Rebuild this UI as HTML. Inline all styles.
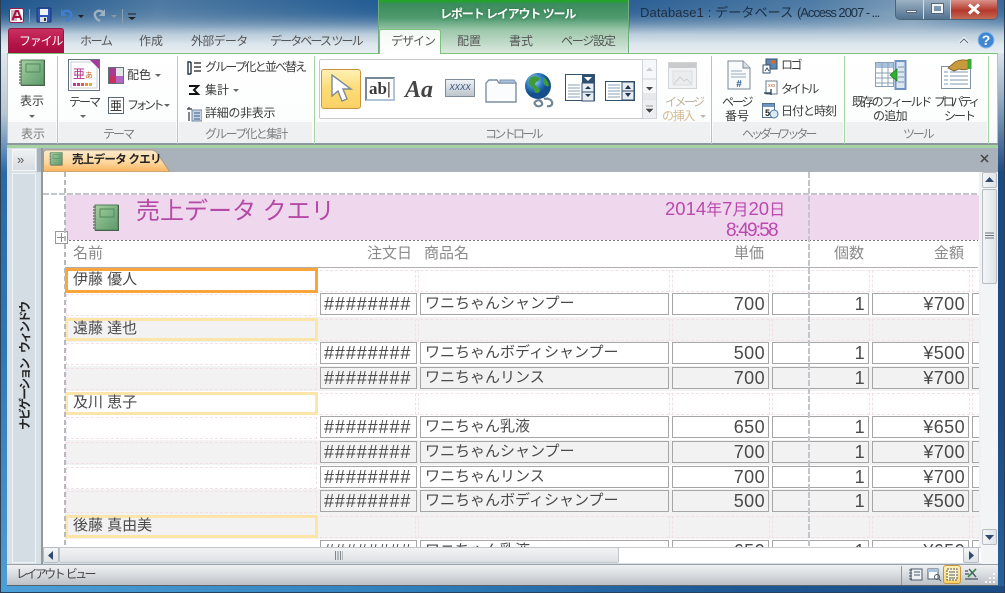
<!DOCTYPE html>
<html lang="ja"><head><meta charset="utf-8"><title>Access</title>
<style>
html,body{margin:0;padding:0;background:#2a6aa5}
body{width:1005px;height:593px;position:relative;overflow:hidden;font-family:"Liberation Sans","Noto Sans CJK JP",sans-serif;font-size:12px;color:#3c3c3c}
div,span.p,svg{position:absolute;box-sizing:border-box}
.t{white-space:nowrap;line-height:14px;height:14px}
.k{letter-spacing:-1.6px}
.g{color:#7d7d7d}
.d{color:#bfb4a2}
.band{top:122px;height:21px;background:#eef0f1}
.sep{top:56px;width:1px;height:88px;background:#a6d3a6}
.tab{top:34px;color:#555;letter-spacing:-1.4px}
.a{width:0;height:0;border-left:3px solid transparent;border-right:3px solid transparent;border-top:3px solid #666}
.h{font-size:15px;color:#8a8a8a;top:246px;line-height:15px;white-space:nowrap}
.r{left:65px;width:916px}
.gr{background:#f2f2f2}
.c{top:1px;height:22px;border:1px solid #a6a6a6;font-size:15px;line-height:20px;white-space:nowrap;overflow:hidden;color:#4a4a4a}
.dt{left:255px;width:97px;letter-spacing:.9px;padding-left:3px;font-size:18px}
.pr{left:355px;width:249px;padding-left:4px}
.n{font-family:"Liberation Sans",sans-serif;font-size:18px;letter-spacing:.4px;text-align:right;padding-right:3px}
.c3{left:607px;width:97px}.c4{left:707px;width:97px}.c5{left:807px;width:97px}.c6{left:907px;width:20px}
.nm{left:0;top:1px;width:253px;height:23px;border:3px solid #fde4a8;font-size:15px;line-height:15px;padding-left:5px;color:#4a4a4a;white-space:nowrap}
.dp{border:1px dashed #f1e0e8}
.ph{left:255px;top:2px;width:660px;height:22px;border-top:1px dashed #f1e0e8;border-bottom:1px dashed #f1e0e8}
.v{width:1px;top:2px;height:22px;border-left:1px dashed #f1e0e8}
.dg{font-size:18.500px;font-family:"Liberation Sans",sans-serif}
</style></head><body>
<svg width="0" height="0" style="position:absolute"><defs>
<linearGradient id="nb" x1="0" y1="0" x2="1" y2="1"><stop offset="0" stop-color="#a9cfa0"/><stop offset=".5" stop-color="#7fb385"/><stop offset="1" stop-color="#5d9a6a"/></linearGradient>
<symbol id="note" viewBox="0 0 28 28"><rect x="3" y="1" width="24" height="26" fill="#444"/><rect x="3" y="1" width="23" height="25" fill="url(#nb)" stroke="#4b7f57"/><rect x="8" y="5" width="14" height="8" fill="none" stroke="#4f8a5e"/><path d="M1 3h3M1 6h3M1 9h3M1 12h3M1 15h3M1 18h3M1 21h3M1 24h3" stroke="#777" stroke-width="1.4"/></symbol>
</defs></svg>

<!-- window frame -->
<div style="left:0;top:0;width:1005px;height:593px;background:linear-gradient(180deg,#2a6096 0,#3a6d9d 8px,#6f93b3 18px,#adc2d4 30px,#dbe5ec 44px,#e9eef2 53px)"></div>
<div style="left:0;top:0;width:630px;height:34px;background:linear-gradient(95deg,#174f88 0,#5c84a8 25%,#3d6d9b 45%,#205b95 60%,#2b6398 100%);opacity:.7;-webkit-mask-image:linear-gradient(180deg,#000 40%,transparent)"></div>
<div style="left:628px;top:0;width:377px;height:34px;background:linear-gradient(90deg,#2c5f94 0,#5f88ad 50%,#9fb5c7 75%,#3a6b9c 100%);opacity:.7;-webkit-mask-image:linear-gradient(180deg,#000 40%,transparent)"></div>
<div style="left:0;top:53px;width:7px;height:540px;background:linear-gradient(180deg,#dfe7ee 0,#b9c7d4 60px,#296aa6 120px,#2c79b8 300px,#57a6d9 593px)"></div>
<div style="left:998px;top:53px;width:7px;height:540px;background:linear-gradient(180deg,#d8e2ea 0,#9fb3c6 40px,#1d4a80 120px,#1d4a80 360px,#2a6aa8 593px)"></div>
<div style="left:0;top:586px;width:1005px;height:7px;background:linear-gradient(90deg,#4ba0d8,#2f7fbd 40%,#1e5a96 70%,#1b4c85);border-bottom:1px solid #24425f"></div>
<div style="left:0;top:0;width:1px;height:593px;background:#2c3e50"></div>
<div style="left:1004px;top:0;width:1px;height:593px;background:#2c3e50"></div>

<!-- contextual tab band -->
<div style="left:378px;top:0;width:251px;height:53px;background:linear-gradient(180deg,#23a32a 0,#23a32a 2px,#3a8b5c 3px,#4e9a6e 18px,#9cc7aa 30px,#dbe9df 53px);border-left:1px solid #6fae7c;border-right:1px solid #6fae7c"></div>
<div class="t" style="left:440px;top:7px;color:#fff;font-weight:bold;font-size:12px;letter-spacing:-1.1px;text-shadow:0 0 3px #2a6b44">レポート レイアウト ツール</div>

<!-- QAT -->
<svg style="left:8px;top:6px" width="135" height="20" viewBox="0 0 135 20">
<rect x="1.5" y="2.5" width="14" height="14" rx="2" fill="#fff" stroke="#9c1a48"/><rect x="3" y="4" width="6" height="11" fill="#d7b0c0"/>
<path d="M4.5 14 8 5h2l3.500 9M6 11h6" fill="none" stroke="#a3103f" stroke-width="2"/>
<path d="M21.500 3v14" stroke="#8ea0b0"/>
<rect x="29" y="2" width="14" height="14" rx="1" fill="#2e56b4" stroke="#1c3478"/><rect x="32" y="3" width="8" height="6" fill="#eef3fa"/><rect x="32" y="11" width="7" height="5" fill="#d8dfe8"/><rect x="36" y="12" width="2" height="3" fill="#333"/>
<path d="M55 6c5-3 9 0 8 4-1 3-3 4-5 5" fill="none" stroke="#3f7fd0" stroke-width="2.400"/><path d="M53 3v7h6z" fill="#3f7fd0"/>
<path d="M70 9l3 3 3-3z" fill="#222"/>
<path d="M95 6c-5-3-9 0-8 4 1 3 3 4 5 5" fill="none" stroke="#9fb0be" stroke-width="2.400"/><path d="M97 3v7h-6z" fill="#9fb0be"/>
<path d="M103 9l3 3 3-3z" fill="#8a97a3"/>
<path d="M114.500 3v14" stroke="#8ea0b0"/>
<path d="M120 8h8" stroke="#222"/><path d="M120 11l4 3 4-3z" fill="#222"/>
</svg>

<!-- title -->
<div class="t" style="left:640px;top:6px;font-size:13px;color:#1d2f44;letter-spacing:.12px">Database1 : データベース <span style="letter-spacing:-1.050px">(Access 2007 - ...</span></div>
<div style="left:895px;top:0;width:103px;height:20px;border:1px solid #4d6578;border-top:0;border-radius:0 0 5px 5px;overflow:hidden;background:#6d8ba6">
<div style="left:0;top:0;width:28px;height:19px;background:linear-gradient(180deg,#9db1c3,#52728f);border-right:1px solid #d5dee6"></div>
<div style="left:28px;top:0;width:27px;height:19px;background:linear-gradient(180deg,#9db1c3,#52728f);border-right:1px solid #d5dee6"></div>
<div style="left:55px;top:0;width:47px;height:19px;background:linear-gradient(180deg,#d9918a,#b4392c 55%,#c26a55)"></div>
<div style="left:10px;top:10px;width:11px;height:3px;background:#f4f6f8;border:1px solid #56697a"></div>
<div style="left:36px;top:4px;width:11px;height:9px;border:2px solid #f1f4f7;outline:1px solid #56697a"></div>
<svg style="left:70px;top:3px" width="16" height="12"><path d="M3 1.500l10 9M13 1.500l-10 9" stroke="#fff" stroke-width="3"/></svg>
</div>

<!-- file tab + tabs -->
<div style="left:8px;top:28px;width:56px;height:26px;border-radius:3px 3px 0 0;background:linear-gradient(180deg,#c9305f,#b61549 55%,#a50c40);border:1px solid #8f1a3f;border-bottom:0"></div>
<div class="t" style="left:19px;top:34px;color:#fff;letter-spacing:-1.2px">ファイル</div>
<div class="t tab" style="left:80px">ホーム</div>
<div class="t tab" style="left:139px;letter-spacing:0">作成</div>
<div class="t tab" style="left:191px;letter-spacing:-.7px">外部データ</div>
<div class="t tab" style="left:270px;letter-spacing:-1.900px">データベース ツール</div>
<div class="t tab" style="left:457px;letter-spacing:0">配置</div>
<div class="t tab" style="left:509px;letter-spacing:0">書式</div>
<div class="t tab" style="left:561px;letter-spacing:-1.200px">ページ設定</div>

<svg style="left:955px;top:30px" width="42" height="20"><path d="M5 13l4-4 4 4" fill="none" stroke="#fff" stroke-width="3"/><path d="M5 13l4-4 4 4" fill="none" stroke="#5b6b7a" stroke-width="1.200"/><circle cx="31" cy="10" r="8" fill="#3f86d3" stroke="#8db9e6"/><text x="31" y="15" font-size="14" font-weight="bold" fill="#fff" text-anchor="middle" font-family="Liberation Sans">?</text></svg>

<!-- ribbon body -->
<div style="left:7px;top:53px;width:991px;height:92px;background:linear-gradient(180deg,#fff,#fcfdfd 70%,#f6f7f8);border-top:1px solid #79c279;border-left:1px solid #a7d0a7;border-right:1px solid #b7c3cc"></div>
<div style="left:379px;top:29px;width:62px;height:25px;background:linear-gradient(180deg,#f4f9f5,#fff);border:1px solid #79c279;border-bottom:0;border-radius:3px 3px 0 0"></div>
<div class="t tab" style="left:391px;color:#555;letter-spacing:-1px">デザイン</div>

<div style="left:7px;top:143px;width:991px;height:2px;background:#8f979e"></div>
<div style="left:7px;top:145px;width:991px;height:3px;background:#a5d2a3"></div>

<div class="band" style="left:8px;width:48px"></div>
<div class="band" style="left:59px;width:117px"></div>
<div class="band" style="left:179px;width:133px"></div>
<div class="band" style="left:316px;width:394px"></div>
<div class="band" style="left:713px;width:130px"></div>
<div class="band" style="left:846px;width:141px"></div>
<div class="sep" style="left:57px"></div><div class="sep" style="left:177px"></div><div class="sep" style="left:314px"></div><div class="sep" style="left:711px"></div><div class="sep" style="left:844px"></div><div class="sep" style="left:988px"></div>

<div class="t g" style="left:21px;top:127px">表示</div>
<div class="t g k" style="left:103px;top:127px;letter-spacing:-2px">テーマ</div>
<div class="t g" style="left:205px;top:127px;letter-spacing:-1.700px">グループ化と集計</div>
<div class="t g" style="left:485px;top:127px;letter-spacing:-2.700px">コントロール</div>
<div class="t g" style="left:742px;top:127px;letter-spacing:-3px">ヘッダー/フッター</div>
<div class="t g" style="left:903px;top:127px;letter-spacing:-2.200px">ツール</div>

<!-- view -->
<svg style="left:18px;top:59px" width="28" height="28"><use href="#note" width="28" height="28"/></svg>
<div class="t" style="left:20px;top:94px">表示</div><div class="a" style="left:29px;top:115px"></div>

<!-- theme -->
<svg style="left:68px;top:59px" width="32" height="32"><rect x=".5" y=".5" width="31" height="31" fill="#fff" stroke="#5f6f80"/><rect x="3" y="3" width="26" height="26" fill="#fff" stroke="#c9ced4"/><path d="M22 1h9v9z" fill="#a43b99"/><text x="5" y="19" font-size="12" fill="#b5268a" font-family="Noto Sans CJK JP">亜</text><text x="17" y="19" font-size="8" fill="#c0622a" font-family="Noto Sans CJK JP">あ</text><path d="M5 24h3v3H5z" fill="#b43aa0"/><path d="M9 24h3v3H9z" fill="#c83a7a"/><path d="M13 24h3v3h-3z" fill="#e05a50"/><path d="M17 24h3v3h-3z" fill="#e8903a"/><path d="M21 24h3v3h-3z" fill="#d8b030"/></svg>
<div class="t k" style="left:69px;top:95px;letter-spacing:-2px">テーマ</div><div class="a" style="left:80px;top:115px"></div>
<svg style="left:108px;top:67px" width="16" height="17"><rect x=".5" y=".5" width="15" height="16" fill="#fff" stroke="#66707a"/><rect x="1" y="1" width="7" height="8" fill="#a83a8f"/><rect x="8" y="1" width="7" height="8" fill="#e3e6e9"/><rect x="1" y="9" width="7" height="7" fill="#c9305f"/><rect x="8" y="9" width="7" height="7" fill="#b266bf"/></svg>
<div class="t" style="left:127px;top:68px">配色</div><div class="a" style="left:155px;top:74px"></div>
<svg style="left:108px;top:97px" width="16" height="17"><rect x=".5" y=".5" width="15" height="16" fill="#fff" stroke="#5a6876"/><text x="2" y="13" font-size="12" fill="#222" font-family="Noto Sans CJK JP">亜</text></svg>
<div class="t" style="left:127px;top:98px;letter-spacing:-3.500px">フォント</div><div class="a" style="left:164px;top:104px"></div>

<!-- group -->
<svg style="left:186px;top:60px" width="16" height="64"><path d="M5 2H2v12h3M5 2v12" fill="none" stroke="#234" stroke-width="1.400"/><path d="M8 3h7M8 7h7M8 11h7" stroke="#444" stroke-width="1.500"/><path d="M3 26h9l-4 4 4 4H3" fill="none" stroke="#111" stroke-width="2"/><path d="M1 49h5M3 47v2M3 52v9" stroke="#334" stroke-width="1.200"/><rect x="6" y="50" width="10" height="11" fill="#c5d5e6" stroke="#6d88a4"/><path d="M8 53h6M8 56h6M8 59h6" stroke="#39587a"/></svg>
<div class="t" style="left:205px;top:60px;letter-spacing:-1.900px">グループ化と並べ替え</div>
<div class="t" style="left:205px;top:83px">集計</div><div class="a" style="left:233px;top:89px"></div>
<div class="t" style="left:205px;top:106px;letter-spacing:-.3px">詳細の非表示</div>

<!-- gallery -->
<div style="left:319px;top:59px;width:337px;height:60px;background:#fff;border:1px solid #c6c9cc;border-radius:2px"></div>
<div style="left:321px;top:69px;width:40px;height:40px;background:linear-gradient(180deg,#fff0b4,#fddc75 50%,#fcd166);border:1px solid #c4963f;border-radius:3px"></div>
<svg style="left:330px;top:74px" width="24" height="30"><path d="M2 1v21l6-5 4 10 5-2-4-10h8z" fill="#fff" stroke="#7c8a96" stroke-width="1.400"/></svg>
<div style="left:365px;top:77px;width:30px;height:24px;background:#fff;border:2px solid #77889a;border-right-color:#b0c3d6;border-bottom-color:#b0c3d6;font:bold 17px/20px 'Liberation Serif',serif;color:#3a3a3a;padding-left:2px">ab|</div>
<div style="left:405px;top:74px;width:34px;height:32px;font:italic bold 24px/32px 'Liberation Serif',serif;color:#454545">Aa</div>
<div style="left:445px;top:79px;width:30px;height:18px;background:linear-gradient(180deg,#eef1f4,#bcc4cc);border:1px solid #7f8d9a;font:italic 8px/16px 'Liberation Sans',sans-serif;color:#2c4a7a;text-align:center">XXXX</div>
<svg style="left:485px;top:77px" width="32" height="26"><path d="M1 25V6l3-3h8l2 3h17v19z" fill="#fbfcfd" stroke="#7d8ea0" stroke-width="1.400"/><path d="M15 3h14l2 3H15z" fill="#a9c3de" stroke="#7d93aa"/></svg>
<svg style="left:524px;top:72px" width="32" height="40"><defs><radialGradient id="gl" cx=".35" cy=".3"><stop offset="0" stop-color="#bde2f7"/><stop offset=".6" stop-color="#2f7fc4"/><stop offset="1" stop-color="#144f8d"/></radialGradient></defs><circle cx="14" cy="14" r="13" fill="url(#gl)"/><path d="M6 6c4-3 9-2 10 1-1 3-4 2-5 5 1 4 5 3 5 7-2 3-5 3-6-1-1-3-4-3-5-6-1-2 0-4 1-6zM19 5c3 1 6 5 6 9-3 1-5-1-6-4z" fill="#3f9a3c"/><path d="M11 30c3-3 6-2 7 1 1 2-2 4-5 3-2-1-3-3-2-4zM20 27c3-1 7 0 8 3s-2 5-5 4" fill="none" stroke="#708494" stroke-width="2.200"/></svg>
<svg style="left:565px;top:74px" width="30" height="28"><rect x=".5" y=".5" width="29" height="26" fill="#fff" stroke="#33506f"/><rect x="17" y="1" width="12" height="8" fill="#2f4f72"/><path d="M19 3h8l-4 4z" fill="#fff"/><rect x="17" y="9" width="12" height="18" fill="#e8edf2" stroke="#33506f"/><path d="M20 15l3-3 3 3zM20 20l3 3 3-3z" fill="#1d3450"/><path d="M17 18h12" stroke="#33506f"/><path d="M3 11h12M3 14h12M3 17h12M3 20h12M3 23h12" stroke="#8aa0b8"/></svg>
<svg style="left:605px;top:81px" width="30" height="20"><rect x=".5" y=".5" width="29" height="19" fill="#fff" stroke="#33506f"/><rect x="17" y="1" width="12" height="18" fill="#e8edf2" stroke="#33506f"/><path d="M20 8l3-4 3 4zM20 12l3 4 3-4z" fill="#1d3450"/><path d="M17 10h12" stroke="#33506f"/><path d="M3 4h12M3 7h12M3 10h12M3 13h12M3 16h12" stroke="#8aa0b8"/></svg>
<svg style="left:642px;top:59px" width="15" height="60"><rect x=".5" y=".5" width="14" height="59" fill="#f6f7f8" stroke="#d0d4d8"/><path d="M1 20h13M1 40h13" stroke="#d0d4d8"/><rect x="1" y="34" width="13" height="6" fill="#e6e8ea"/><rect x="1" y="41" width="13" height="18" fill="#eceef0"/><path d="M4 12l3.500-3.500L11 12z" fill="#c5ccd3"/><path d="M4 28h7l-3.500 3.500z" fill="#444"/><path d="M4 47h7M4 50h7l-3.500 3.500z" fill="#444" stroke="#444" stroke-width=".5"/></svg>

<!-- image -->
<svg style="left:668px;top:62px" width="30" height="27"><rect x=".5" y=".5" width="28" height="26" fill="#f1f2f3" stroke="#d1d3d5"/><rect x="1" y="1" width="27" height="5" fill="#c8cacc"/><rect x="5" y="9" width="19" height="14" fill="#eaeced" stroke="#dcdedf"/><path d="M6 22l6-7 4 4 3-2 4 5" fill="none" stroke="#cfd2d4"/></svg>
<div class="t d" style="left:665px;top:95px;letter-spacing:-2.600px">イメージ</div>
<div class="t d" style="left:662px;top:109px;letter-spacing:-1.300px;color:#d4bb95">の挿入</div><div class="a" style="left:700px;top:115px;border-top-color:#bbb"></div>

<!-- header/footer -->
<svg style="left:727px;top:60px" width="24" height="30"><path d="M1 1h15l7 7v21H1z" fill="#f8fafc" stroke="#7a8996"/><path d="M16 1v7h7" fill="#d7dee5" stroke="#7a8996"/><path d="M4 11h11M4 14h15M4 17h15" stroke="#99aabb"/><text x="12" y="27" font-size="10" font-weight="bold" fill="#2c5c8d" text-anchor="middle" font-family="Liberation Sans">#</text></svg>
<div class="t" style="left:722px;top:95px;letter-spacing:-2.100px">ページ</div>
<div class="t" style="left:725px;top:109px">番号</div>
<svg style="left:762px;top:58px" width="16" height="16"><rect x="4" y="1" width="11" height="10" fill="#5d87b2" stroke="#33506f"/><circle cx="11" cy="4" r="2" fill="#d96a2a"/><path d="M1 7h7v8H1z" fill="#fff" stroke="#33506f"/><path d="M3 13l2-3 2 3" fill="none" stroke="#33506f"/></svg>
<div class="t" style="left:781px;top:58px;letter-spacing:-2.500px">ロゴ</div>
<svg style="left:763px;top:80px" width="15" height="16"><rect x="3" y="1" width="11" height="13" fill="#fff" stroke="#6a7c8e"/><text x="5" y="7" font-size="5" fill="#c0622a" font-family="Liberation Sans">xxx</text><path d="M1 13h7M8 9v6" stroke="#1d3450" stroke-width="1.200"/></svg>
<div class="t" style="left:781px;top:82px;letter-spacing:-3.200px">タイトル</div>
<svg style="left:762px;top:103px" width="17" height="16"><rect x=".5" y=".5" width="12" height="14" fill="#fff" stroke="#54708c"/><rect x="1" y="1" width="11" height="3" fill="#6f95c2"/><text x="3" y="13" font-size="9" font-weight="bold" fill="#222" font-family="Liberation Sans">5</text><circle cx="12" cy="11" r="4" fill="#dce9f5" stroke="#4a74a0"/></svg>
<div class="t" style="left:781px;top:104px;letter-spacing:-1px">日付と時刻</div>

<!-- tools -->
<svg style="left:875px;top:60px" width="32" height="30"><rect x=".5" y="2.500" width="18" height="24" fill="#fff" stroke="#8aa0b4"/><rect x="1" y="3" width="17" height="5" fill="#a9c3de"/><path d="M1 13h17M1 18h17M1 23h17M7 3v23M13 3v23" stroke="#8aa0b4"/><rect x="20.500" y="1" width="10" height="28" fill="#dbe6f2" stroke="#6f92c4" stroke-width="2"/><path d="M23 7h6M23 12h6M23 17h6M23 22h6" stroke="#7d93aa"/><path d="M15 15l7-6v12z" fill="#2cb12c" stroke="#1c7d1c" stroke-width=".8"/></svg>
<div class="t" style="left:852px;top:95px;letter-spacing:-2.200px">既存のフィールド</div>
<div class="t" style="left:873px;top:109px;letter-spacing:-.7px">の追加</div>
<svg style="left:941px;top:58px" width="32" height="32"><rect x=".5" y="8.500" width="29" height="22" fill="#fff" stroke="#8093a6"/><path d="M3 14h4M9 14h18M3 18h4M9 18h18M3 22h4M9 22h18M3 26h4M9 26h18" stroke="#7f98b2"/><path d="M7 10l7-6c3-2 10-3 13-1v8c-3 1-6 1-9 0l-5 2z" fill="#c69a3d" stroke="#7a5a1d" stroke-width=".8"/><rect x="26.500" y="1" width="4" height="10" fill="#35ad35"/></svg>
<div class="t" style="left:934px;top:95px;letter-spacing:-3.200px">プロパティ</div>
<div class="t" style="left:944px;top:109px;letter-spacing:-2px">シート</div>

<!-- document zone -->
<div style="left:7px;top:148px;width:991px;height:438px;background:#d8dfe5"></div>
<div style="left:37px;top:148px;width:961px;height:24px;background:#a9b1ba"></div>
<div style="left:41px;top:148px;width:2px;height:416px;background:#8e9a9c"></div>
<div style="left:12px;top:149px;width:24px;height:22px;background:linear-gradient(180deg,#eef1f3,#d7dde3);border:1px solid #f4f6f8"></div>
<div class="t" style="left:17px;top:153px;font-size:13px;letter-spacing:-1px;color:#555">&raquo;</div>
<div style="left:12px;top:173px;width:24px;height:390px;background:#d5dde4;border:1px solid #f1f4f6"></div>
<div class="t" style="left:-38px;top:360px;width:126px;font-weight:bold;color:#222;transform:rotate(-90deg);text-align:center;letter-spacing:-1.900px;word-spacing:5px">ナビゲーション ウィンドウ</div>

<!-- object tab -->
<svg style="left:43px;top:149px" width="132" height="24"><defs><linearGradient id="ot" x1="0" y1="0" x2="0" y2="1"><stop offset="0" stop-color="#fdeacb"/><stop offset=".55" stop-color="#fcd79f"/><stop offset="1" stop-color="#f9b25a"/></linearGradient></defs><path d="M.5 23V4Q.5 1 4 1h104q4 0 6 3l13 19z" fill="url(#ot)" stroke="#a59a88"/></svg>
<svg style="left:49px;top:152px" width="14" height="14"><use href="#note" width="14" height="14"/></svg>
<div class="t" style="left:72px;top:153px;font-weight:bold;font-size:11.500px;color:#222;letter-spacing:-.7px">売上データ クエリ</div>
<svg style="left:979px;top:153px" width="12" height="12"><path d="M2 2l7 7M9 2L2 9" stroke="#444" stroke-width="1.500"/></svg>

<!-- report -->
<div style="left:0;top:0;width:981px;height:547px;overflow:hidden">
<div style="left:43px;top:172px;width:938px;height:375px;background:#fff"></div>
<div style="left:65px;top:195px;width:916px;height:45px;background:#efd8ee"></div>
<div style="left:43px;top:193px;width:935px;height:2px;background:repeating-linear-gradient(90deg,#c2c6cc 0,#c2c6cc 6px,#fff 6px,#fff 8px)"></div>
<div style="left:65px;top:240px;width:913px;height:1px;background:repeating-linear-gradient(90deg,#777 0,#777 2px,transparent 2px,transparent 4px)"></div>
<svg style="left:92px;top:204px" width="28" height="28"><use href="#note" width="28" height="28"/></svg>
<div class="t" style="left:136px;top:197px;height:30px;line-height:30px;font-size:24px;color:#b54aa6">売上データ クエリ</div>
<div class="t" style="left:665px;top:200px;height:18px;line-height:18px;font-size:16px;color:#bb48ac"><span class="dg">2014</span>年<span class="dg">7</span>月<span class="dg">20</span>日</div>
<div class="t dg" style="left:726px;top:222px;height:18px;line-height:18px;font-size:19px;letter-spacing:-1.800px;color:#bb48ac">8:49:58</div>
<div style="left:55px;top:231px;width:13px;height:13px;background:#fff;border:1px solid #9a9a9a"></div>
<svg style="left:56px;top:232px" width="11" height="11"><path d="M5.500 1v9M1 5.500h9" stroke="#888"/></svg>

<div class="h" style="left:73px">名前</div><div class="h" style="left:367px">注文日</div><div class="h" style="left:424px">商品名</div><div class="h" style="left:734px">単価</div><div class="h" style="left:834px">個数</div><div class="h" style="left:934px">金額</div>
<div style="left:65px;top:267px;width:913px;height:1px;background:#b0b0b0"></div>

<!-- rows -->
<div class="r" style="top:268px;height:25px"><div class="nm" style="border-color:#f9a53b;top:0;height:25px;line-height:17px">伊藤 優人</div><div class="ph"></div><div class="v" style="left:350px"></div><div class="v" style="left:353px"></div><div class="v" style="left:604px"></div><div class="v" style="left:607px"></div><div class="v" style="left:704px"></div><div class="v" style="left:707px"></div><div class="v" style="left:804px"></div><div class="v" style="left:807px"></div><div class="v" style="left:904px"></div><div class="v" style="left:907px"></div></div>
<div class="r" style="top:292px;height:25px"><div class="dp" style="left:1px;top:2px;width:251px;height:22px"></div><div class="c dt">########</div><div class="c pr">ワニちゃんシャンプー</div><div class="c n c3">700</div><div class="c n c4">1</div><div class="c n c5">¥700</div><div class="c c6"></div></div>
<div class="r gr" style="top:317px;height:25px"><div class="nm">遠藤 達也</div><div class="ph"></div><div class="v" style="left:350px"></div><div class="v" style="left:353px"></div><div class="v" style="left:604px"></div><div class="v" style="left:607px"></div><div class="v" style="left:704px"></div><div class="v" style="left:707px"></div><div class="v" style="left:804px"></div><div class="v" style="left:807px"></div><div class="v" style="left:904px"></div><div class="v" style="left:907px"></div></div>
<div class="r" style="top:341px;height:25px"><div class="dp" style="left:1px;top:2px;width:251px;height:22px"></div><div class="c dt">########</div><div class="c pr">ワニちゃんボディシャンプー</div><div class="c n c3">500</div><div class="c n c4">1</div><div class="c n c5">¥500</div><div class="c c6"></div></div>
<div class="r gr" style="top:366px;height:25px"><div class="dp" style="left:1px;top:2px;width:251px;height:22px"></div><div class="c dt">########</div><div class="c pr">ワニちゃんリンス</div><div class="c n c3">700</div><div class="c n c4">1</div><div class="c n c5">¥700</div><div class="c c6"></div></div>
<div class="r" style="top:391px;height:25px"><div class="nm">及川 恵子</div><div class="ph"></div><div class="v" style="left:350px"></div><div class="v" style="left:353px"></div><div class="v" style="left:604px"></div><div class="v" style="left:607px"></div><div class="v" style="left:704px"></div><div class="v" style="left:707px"></div><div class="v" style="left:804px"></div><div class="v" style="left:807px"></div><div class="v" style="left:904px"></div><div class="v" style="left:907px"></div></div>
<div class="r" style="top:415px;height:25px"><div class="dp" style="left:1px;top:2px;width:251px;height:22px"></div><div class="c dt">########</div><div class="c pr">ワニちゃん乳液</div><div class="c n c3">650</div><div class="c n c4">1</div><div class="c n c5">¥650</div><div class="c c6"></div></div>
<div class="r gr" style="top:440px;height:25px"><div class="dp" style="left:1px;top:2px;width:251px;height:22px"></div><div class="c dt">########</div><div class="c pr">ワニちゃんシャンプー</div><div class="c n c3">700</div><div class="c n c4">1</div><div class="c n c5">¥700</div><div class="c c6"></div></div>
<div class="r" style="top:465px;height:25px"><div class="dp" style="left:1px;top:2px;width:251px;height:22px"></div><div class="c dt">########</div><div class="c pr">ワニちゃんリンス</div><div class="c n c3">700</div><div class="c n c4">1</div><div class="c n c5">¥700</div><div class="c c6"></div></div>
<div class="r gr" style="top:489px;height:25px"><div class="dp" style="left:1px;top:2px;width:251px;height:22px"></div><div class="c dt">########</div><div class="c pr">ワニちゃんボディシャンプー</div><div class="c n c3">500</div><div class="c n c4">1</div><div class="c n c5">¥500</div><div class="c c6"></div></div>
<div class="r gr" style="top:514px;height:25px"><div class="nm">後藤 真由美</div><div class="ph"></div><div class="v" style="left:350px"></div><div class="v" style="left:353px"></div><div class="v" style="left:604px"></div><div class="v" style="left:607px"></div><div class="v" style="left:704px"></div><div class="v" style="left:707px"></div><div class="v" style="left:804px"></div><div class="v" style="left:807px"></div><div class="v" style="left:904px"></div><div class="v" style="left:907px"></div></div>
<div class="r" style="top:539px;height:25px"><div class="c dt">########</div><div class="c pr">ワニちゃん乳液</div><div class="c n c3">650</div><div class="c n c4">1</div><div class="c n c5">¥650</div><div class="c c6"></div></div>

<div style="left:64px;top:172px;width:2px;height:375px;background:repeating-linear-gradient(180deg,#b5babf 0,#b5babf 5px,transparent 5px,transparent 8px)"></div>
<div style="left:808px;top:172px;width:2px;height:375px;background:repeating-linear-gradient(180deg,#c2c6cc 0,#c2c6cc 6px,transparent 6px,transparent 8px)"></div>
</div>
<div style="left:979px;top:172px;width:2px;height:375px;background:#f0f1f2"></div>

<!-- v scrollbar -->
<div style="left:981px;top:172px;width:17px;height:392px;background:#f3f4f5"></div>
<div style="left:982px;top:172px;width:15px;height:16px;background:linear-gradient(90deg,#f4f5f6,#dfe3e7);border:1px solid #b6bcc2;border-radius:2px"></div>
<svg style="left:984px;top:175px" width="11" height="9"><path d="M1 7l4.500-5L10 7z" fill="#2e4a6f"/></svg>
<div style="left:982px;top:189px;width:15px;height:95px;background:linear-gradient(90deg,#f4f5f6,#dfe3e7);border:1px solid #b6bcc2;border-radius:2px"></div>
<svg style="left:985px;top:232px" width="9" height="8"><path d="M0 1h9M0 3.500h9M0 6h9" stroke="#6d7680"/></svg>
<div style="left:982px;top:529px;width:15px;height:16px;background:linear-gradient(90deg,#f4f5f6,#dfe3e7);border:1px solid #b6bcc2;border-radius:2px"></div>
<svg style="left:984px;top:533px" width="11" height="9"><path d="M1 2l4.500 5L10 2z" fill="#2e4a6f"/></svg>

<!-- h scrollbar -->
<div style="left:43px;top:547px;width:938px;height:16px;background:#fff;border-top:1px solid #c9cdd1"></div>
<div style="left:43px;top:547px;width:16px;height:16px;background:linear-gradient(180deg,#f4f5f6,#dfe3e7);border:1px solid #b6bcc2;border-radius:2px"></div>
<svg style="left:47px;top:550px" width="8" height="11"><path d="M6 1L1 5.500 6 10z" fill="#2e4a6f"/></svg>
<div style="left:59px;top:547px;width:560px;height:16px;background:linear-gradient(180deg,#f2f3f4,#dee1e4);border:1px solid #c1c6cb;border-radius:2px"></div>
<svg style="left:335px;top:551px" width="8" height="9"><path d="M.5 0v9M3 0v9M5.500 0v9M8 0v9" stroke="#7d858d"/></svg>
<div style="left:963px;top:547px;width:16px;height:16px;background:linear-gradient(180deg,#f4f5f6,#dfe3e7);border:1px solid #b6bcc2;border-radius:2px"></div>
<svg style="left:968px;top:550px" width="8" height="11"><path d="M1 1l5 4.500L1 10z" fill="#2e4a6f"/></svg>

<!-- status -->
<div style="left:7px;top:564px;width:991px;height:22px;background:linear-gradient(180deg,#eef0f2,#dfe2e5 35%,#bcc1c7);border-top:1px solid #9aa2a9;border-bottom:1px solid #59626a"></div>
<div class="t" style="left:16px;top:567px;color:#444;letter-spacing:-2.600px;word-spacing:2px">レイアウト ビュー</div>
<div style="left:901px;top:566px;width:1px;height:19px;background:#8f979e"></div>
<svg style="left:908px;top:566px" width="16" height="16"><rect x="3" y="3" width="11" height="11" fill="#eef1f4" stroke="#4b5b6b"/><path d="M1 4h3M1 7h3M1 10h3M1 13h3M6 6h6M6 9h6" stroke="#4b5b6b"/></svg>
<svg style="left:926px;top:566px" width="16" height="16"><rect x="2" y="3" width="10" height="10" fill="#fff" stroke="#4b5b6b"/><rect x="2" y="3" width="10" height="3" fill="#a9c3de"/><circle cx="11" cy="11" r="2.500" fill="none" stroke="#4b5b6b"/><path d="M13 13l2 2" stroke="#4b5b6b"/></svg>
<div style="left:943px;top:565px;width:18px;height:19px;background:linear-gradient(180deg,#fff0b4,#fcd166);border:1px solid #c4963f;border-radius:3px"></div>
<svg style="left:944px;top:566px" width="16" height="16"><rect x="3" y="3" width="10" height="11" fill="#fff5cf" stroke="#4b5b6b" stroke-dasharray="2 1"/><path d="M5 6h6M5 9h6M5 12h6" stroke="#4b5b6b"/></svg>
<svg style="left:964px;top:566px" width="16" height="16"><path d="M1 13h13M1 8h4M1 5h3" stroke="#5a6a7a" stroke-width="1.400"/><path d="M4 11l8-8" stroke="#2e8f3a" stroke-width="1.600"/><path d="M5 3l7 8" stroke="#4b5b6b" stroke-width="1.400"/></svg>
<svg style="left:984px;top:572px" width="12" height="12"><path d="M9 1h2v2H9zM5 5h2v2H5zM9 5h2v2H9zM1 9h2v2H1zM5 9h2v2H5zM9 9h2v2H9z" fill="#f5f6f7"/></svg>
</body></html>
